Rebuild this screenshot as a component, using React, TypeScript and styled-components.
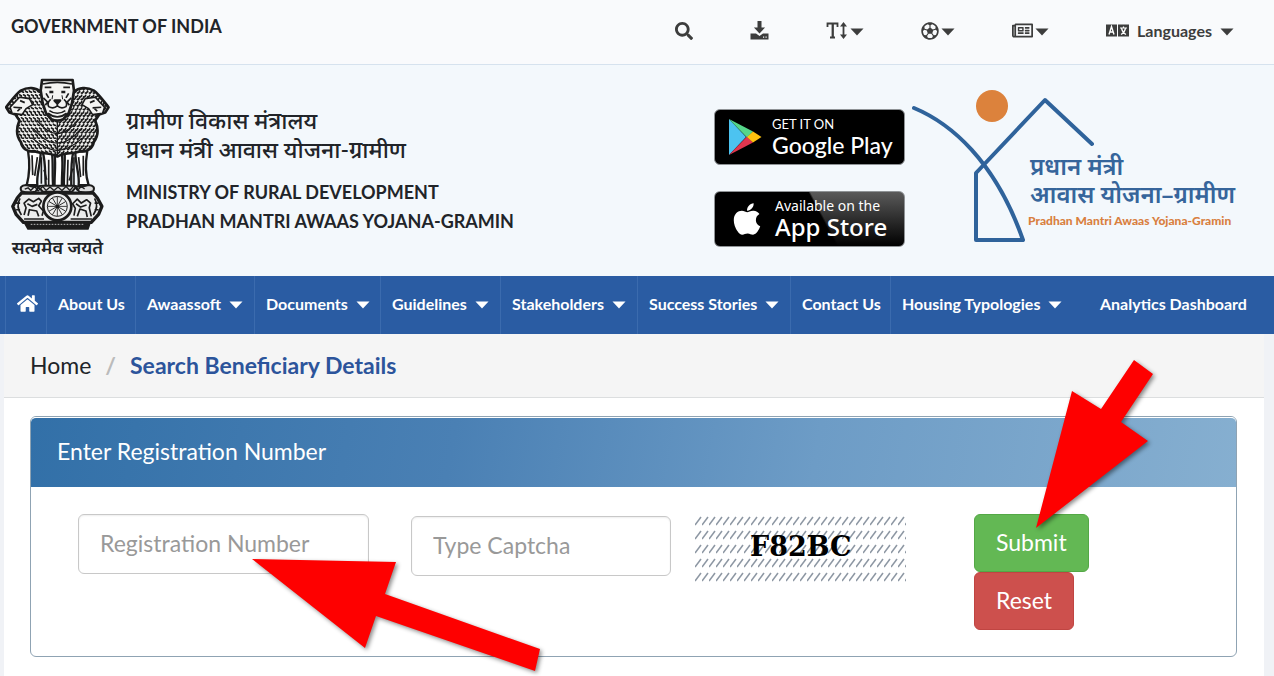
import React from "react";
import styled, { createGlobalStyle } from "styled-components";
import {
  FaSearch,
  FaRegFutbol,
  FaRegNewspaper,
  FaHome,
  FaApple,
} from "react-icons/fa";

const GlobalStyle = createGlobalStyle`
  *, *::before, *::after { box-sizing: border-box; }
  body {
    margin: 0;
    background: #f0f2f6;
    color: #212429;
    font-family: Lato, "Noto Sans", sans-serif;
    overflow-x: hidden;
  }
  a { color: inherit; text-decoration: none; }
  button { font-family: inherit; cursor: pointer; }
`;

const Page = styled.div`
  display: flex;
  flex-direction: column;
  min-height: 100vh;
`;

/* ---------- top bar ---------- */

const TopBar = styled.div`
  display: flex;
  justify-content: space-between;
  height: 65px;
  padding: 0 40px 0 11px;
  background: #f9fafc;
  border-bottom: 1px solid #d6e2ee;
`;

const GovLink = styled.a`
  padding-top: 14px;
  font-size: 18px;
  line-height: 24px;
  font-weight: 700;
`;

const Tools = styled.div`
  display: flex;
  align-items: center;
  gap: 57px;
  height: 61px;
  color: #3d3d3d;
`;

const Tool = styled.button`
  display: flex;
  align-items: center;
  gap: 2px;
  padding: 0;
  border: 0;
  background: none;
  color: inherit;
  font-size: 18px;
`;

const LanguageTool = styled(Tool)`
  gap: 8px;
  font-size: 16px;
  font-weight: 700;
`;

const CaretIcon = styled.svg`
  flex: none;
  margin-top: 3px;
`;

/* ---------- masthead ---------- */

const Masthead = styled.header`
  display: flex;
  justify-content: space-between;
  height: 211px;
  padding: 0 38px 0 5px;
  background: #f3f8fc;
`;

const Brand = styled.a`
  display: flex;
  gap: 16px;
`;

const EmblemBox = styled.div`
  display: flex;
  flex-direction: column;
  align-items: center;
  width: 105px;
  padding-top: 13px;
`;

const Motto = styled.span`
  font-size: 18px;
  line-height: 32px;
  font-weight: 600;
  white-space: nowrap;
`;

const BrandText = styled.div`
  display: flex;
  flex-direction: column;
  padding-top: 41px;
  font-weight: 700;
  white-space: nowrap;
`;

const HindiLine = styled.span`
  font-size: 23px;
  line-height: 29px;
  font-weight: 500;
`;

const EnglishName = styled.div`
  padding-top: 14px;
  font-size: 18px;
  line-height: 29px;
`;

const Partners = styled.div`
  display: flex;
  gap: 6px;
`;

const Stores = styled.div`
  display: flex;
  flex-direction: column;
  gap: 26px;
  padding-top: 44px;
`;

const StoreBadge = styled.a<{ $shine?: boolean }>`
  display: flex;
  align-items: center;
  gap: 10px;
  width: 191px;
  height: 56px;
  padding-left: ${(p) => (p.$shine ? 14 : 13)}px;
  border: 1px solid #8f9396;
  border-radius: 6px;
  color: #fff;
  background: ${(p) =>
    p.$shine
      ? "linear-gradient(62deg, #000 56%, transparent 57%), linear-gradient(#5a5a5a, #000)"
      : "#000"};
`;

const StoreText = styled.span`
  display: flex;
  flex-direction: column;
  white-space: nowrap;
`;

const StoreSmall = styled.span<{ $wide?: boolean }>`
  font-family: ${(p) => (p.$wide ? '"Noto Sans"' : "Lato")}, sans-serif;
  font-size: ${(p) => (p.$wide ? 14 : 13)}px;
  line-height: 16px;
`;

const StoreName = styled.span<{ $wide?: boolean }>`
  font-family: ${(p) => (p.$wide ? '"Noto Sans"' : "Lato")}, sans-serif;
  font-size: ${(p) => (p.$wide ? 24 : 23)}px;
  line-height: 26px;
  font-weight: 500;
`;

/* ---------- navigation ---------- */

const Nav = styled.nav`
  background: #2a5ca3;
`;

const NavList = styled.ul`
  display: grid;
  grid-template-columns: 41fr 89fr 119fr 126fr 120fr 137fr 153fr 100fr 198fr 186fr;
  margin: 0;
  padding: 0 0 0 5px;
  list-style: none;
`;

const NavItem = styled.li<{ $plain?: boolean }>`
  height: 58px;
  border-left: 1px solid ${(p) => (p.$plain ? "transparent" : "#3b6bae")};
`;

const NavLink = styled.a`
  display: flex;
  align-items: center;
  gap: 8px;
  height: 55px;
  padding-left: 11px;
  color: #fff;
  font-size: 16px;
  font-weight: 700;
  white-space: nowrap;
`;

/* ---------- content ---------- */

const Content = styled.main`
  flex: 1;
  margin: 0 10px 0 4px;
  padding-bottom: 19px;
  background: #fff;
`;

const Crumbs = styled.ol`
  display: flex;
  align-items: center;
  gap: 14px;
  height: 64px;
  margin: 0;
  padding: 0 26px 2px;
  list-style: none;
  background: #f5f5f5;
  border-bottom: 1px solid #dcdedf;
  font-size: 23px;
  line-height: 28px;
  white-space: nowrap;
`;

const CrumbSlash = styled.li`
  color: #bbb;
  font-weight: 700;
`;

const CrumbCurrent = styled.li`
  color: #2c549b;
  font-weight: 700;
`;

const Panel = styled.section`
  margin: 18px 27px 0 26px;
  border: 1px solid #8fa3b3;
  border-radius: 6px;
`;

const PanelTitle = styled.h2`
  margin: 0;
  padding: 18px 26px 21px;
  border-top: 1px solid #fff;
  border-radius: 5px 5px 0 0;
  background: linear-gradient(100deg, #3270a8, #4a80b4 35%, #6d9cc6 65%, #86afd0);
  color: #fff;
  font-size: 23px;
  line-height: 30px;
  font-weight: 400;
`;

const Form = styled.form`
  display: grid;
  grid-template-columns:
    minmax(0, 333fr) minmax(0, 284fr) minmax(0, 279fr) minmax(0, 262fr);
  align-items: start;
  padding: 27px 0 26px 47px;
`;

const Field = styled.label<{ $gap: number; $drop?: boolean }>`
  position: relative;
  display: block;
  padding-top: ${(p) => (p.$drop ? 2 : 0)}px;
  padding-right: ${(p) => p.$gap}px;
`;

const TextBox = styled.input`
  display: block;
  width: 100%;
  height: 60px;
  padding: 0 21px 2px;
  border: 1px solid #c8c8c8;
  border-radius: 6px;
  background: #fff;
  box-shadow: inset 0 1px 2px #eee;
  font-family: inherit;
  font-size: 23px;
  &::placeholder {
    color: #999;
    opacity: 1;
  }
`;

const Actions = styled.div`
  position: relative;
  display: flex;
  flex-direction: column;
  align-items: flex-start;
`;

const ActionButton = styled.button<{ $tone: string; $edge: string }>`
  height: 58px;
  padding: 0 21px 3px;
  border: 1px solid ${(p) => p.$edge};
  border-radius: 6px;
  background: ${(p) => p.$tone};
  color: #fff;
  font-size: 23px;
  line-height: 28px;
`;

const Pointer = styled.svg<{ $left: number; $top: number }>`
  position: absolute;
  left: ${(p) => p.$left}px;
  top: ${(p) => p.$top}px;
  z-index: 2;
  pointer-events: none;
  overflow: visible;
  filter: drop-shadow(2px 2px 2px rgba(0, 0, 0, 0.45));
`;

/* ---------- drawings ---------- */

const Caret = () => (
  <CaretIcon width="14" height="8" viewBox="0 0 14 8" aria-hidden="true">
    <path d="M0.5 0.5h13L7 7.500z" fill="currentColor" />
  </CaretIcon>
);

const DownloadIcon = () => (
  <svg width="19" height="19" viewBox="0 0 19 19" aria-hidden="true" fill="currentColor">
    <path d="M7.500 0h4v6.500h3.600L9.500 12.500 3.900 6.500h3.600z" />
    <path d="M0.500 12.500h5.500l3.500 2.500 3.500-2.500h5.500v6h-18zM13 15.500v1.200h1.200v-1.200zM15.500 15.500v1.200h1.200v-1.200z" fillRule="evenodd" />
  </svg>
);

const TextHeightIcon = () => (
  <svg width="22" height="17" viewBox="0 0 22 17" aria-hidden="true" fill="none" stroke="currentColor">
    <path d="M1.500 5V1.500h10V5M6.500 1.500v14M4 15.500h5" strokeWidth="1.800" />
    <path d="M7 2v13" strokeWidth="1.600" />
    <path d="M17.500 3v11" strokeWidth="1.800" />
    <path d="M17.500 0L21 4.500h-7zM17.500 17L21 12.500h-7z" fill="currentColor" stroke="none" />
  </svg>
);

const LanguageIcon = () => (
  <svg width="23" height="13" viewBox="0 0 23 13" aria-hidden="true">
    <path d="M0 0.500h11v12H0zM12 0.500h11v12H12z" fill="#3d3d3d" />
    <path d="M3 10.500L5.500 2.500 8 10.500M4 8h3" fill="none" stroke="#fff" strokeWidth="1.400" />
    <path d="M14 4h7M17.500 2.500V4M19.500 4.500c-.8 3-2.500 5-4.500 6M15.500 4.500c.8 3 2.500 5 4.500 6" fill="none" stroke="#fff" strokeWidth="1.200" />
  </svg>
);

const manePath =
  "M122 66C108 52 84 50 62 62C50 70 40 84 18 112L28 128L46 134L58 152C48 176 50 200 62 216C66 236 82 248 104 244C120 254 140 244 172 260C204 244 224 254 240 244C262 248 278 236 282 216C294 200 296 176 286 152L298 134L316 128L326 112C304 84 294 70 282 62C260 50 236 52 222 66Z";

const curls: string[] = [];
for (let row = 0; row < 21; row++) {
  for (let col = 0; col < 27; col++) {
    const x = 14 + col * 12 + (row % 2) * 6;
    const y = 54 + row * 10;
    const side = x < 172 ? 1 : -1;
    const bend = ((row * 7 + col * 5) % 5) - 2;
    curls.push(`M${x - 5} ${y - side * 3 + bend}q${4 + bend} ${7 - bend} ${9} ${side * 5}`);
  }
}

const legs = [
  "M84 244C90 280 88 316 80 346H112C108 316 122 284 122 246Z",
  "M128 246C138 280 134 316 138 358H160C156 316 160 280 156 250Z",
  "M164 256C168 290 162 320 164 362H186C184 320 190 290 186 254Z",
  "M194 250C196 280 190 320 192 358H214C214 316 212 280 220 246Z",
  "M226 246C226 284 240 316 236 346H266C256 316 256 280 262 244Z",
];

const Emblem = () => (
  <svg width="105" height="153" viewBox="15 24 315 460" role="img" aria-label="State Emblem of India" fill="none" stroke="#1c1c1c" strokeLinejoin="round">
    <defs>
      <clipPath id="mane">
        <path d={manePath} />
      </clipPath>
    </defs>
    {legs.map((d) => (
      <path key={d} d={d} fill="#fff" strokeWidth="7" />
    ))}
    <path d="M96 256l2 60M112 262l-8 56M146 270v80M204 270l-2 80M236 262l6 60M250 258v60M124 262v80M222 262v84M132 300l8 30M218 296l-10 36" strokeWidth="5" />
    <path d={manePath} fill="#f4f4f2" strokeWidth="8" />
    <g clipPath="url(#mane)">
      <path d={curls.join("")} strokeWidth="5" />
      <path d="M110 150q30 40 62 42q32-2 62-42M100 176q36 44 72 44q36 0 72-44M96 204q40 36 76 38q36-2 76-38M172 150v110" strokeWidth="4" />
      <path d="M30 112l28-30 30 4 10 18-20 12-12 18-30-4zM314 112l-28-30-30 4-10 18 20 12 12 18 30-4z" fill="#f4f4f2" strokeWidth="5" />
      <path d="M40 112l26 2M304 112l-26 2M60 92l14 6M284 92l-14 6M52 124l8-8M292 124l-8-8" strokeWidth="5" />
    </g>
    <path d="M126 30H218L222 62L216 100L206 130L190 148Q172 156 154 148L138 130L128 100L122 62Z" fill="#f4f4f2" strokeWidth="8" />
    <path d="M128 42q44-10 88 0M134 52h20M190 52h20M130 84l12 12-6 10M214 84l-12 12 6 10M152 88q-12 10-6 22 14 8 26-2 12 10 26 2 6-12-6-22M172 98v12M148 122q24 16 48 0M144 130q28 22 56 0M138 70l8 14M206 70l-8 14" strokeWidth="5" />
    <path d="M148 66h12M184 66h12M164 92h16l-8 8z" fill="#1c1c1c" strokeWidth="8" />
    <path d="M158 76l-2 12M186 76l2 12" strokeWidth="3" />
    <path d="M78 346q-22 2-14 18 20 8 42 2l10-14 12 14h88l12-14 10 14q22 6 42-2 8-16-14-18l-24 6-20-4H124l-22 4Z" fill="#ddd" strokeWidth="6" />
    <path d="M74 358l10-4 8 8 12-12 10 14 14-14 10 12 12-10 12 10 12-10 12 10 12-12 12 12 12-14 10 14 12-12 10 8" strokeWidth="4" />
    <path d="M64 370H280L292 384L306 410L296 434L274 458H70L48 434L38 410L52 384Z" fill="#eceded" strokeWidth="10" />
    <path d="M60 386q-14 24 4 50M284 386q14 24-4 50M48 400h12M48 420h12M296 400h-12M296 420h-12" strokeWidth="5" />
    <path d="M72 436l6-22-6-14 14-12 14 8 16-10 8 8-8 14 14 16-4 14M84 438l4-18 22 4 6 16M82 402l14 8 16-6M72 448h60M212 448h64M222 438l4-22-8-14 14-14 12 12 16-10 12 10-4 14 6 26M232 440l8-22 18 6 4 18M228 402l14 10 18-6" strokeWidth="5" />
    <circle cx="172" cy="410" r="42" fill="#eceded" strokeWidth="8" />
    <circle cx="172" cy="410" r="30" strokeWidth="3" />
    {Array.from({ length: 12 }, (_, i) => (
      <path key={i} d="M172 404V381" strokeWidth="2.500" transform={`rotate(${i * 30} 172 410)`} />
    ))}
    <circle cx="172" cy="410" r="6" fill="#1c1c1c" />
    <path d="M74 460H270L264 478H84Z" fill="#1c1c1c" strokeWidth="5" />
    <path d="M92 464h160" stroke="#bbb" strokeWidth="3" strokeDasharray="5 4" />
  </svg>
);

const PlayLogo = () => (
  <svg width="34" height="38" viewBox="0 0 34 38" aria-hidden="true">
    <path d="M1 1v36l17-18z" fill="#4cc3f0" />
    <path d="M1 1l24 12.500-6 6z" fill="#55d68a" />
    <path d="M1 37l24-12.500-6-6z" fill="#e0364f" />
    <path d="M25 13.500L33.500 19 25 24.500 19 19z" fill="#fdc30f" />
  </svg>
);

const SchemeLogo = styled.svg`
  display: block;
  margin-top: 21px;
  overflow: visible;
`;

const LogoHindi = styled.text`
  fill: #36659b;
  font-family: "Noto Sans", sans-serif;
  font-size: 24px;
  font-weight: 600;
`;

const LogoEnglish = styled.text`
  fill: #d9803f;
  font-family: Lato, sans-serif;
  font-size: 12px;
  font-weight: 900;
`;

const AwaasLogo = () => (
  <SchemeLogo width="325" height="160" viewBox="911 86 325 160" role="img" aria-label="Pradhan Mantri Awaas Yojana-Gramin">
    <circle cx="992" cy="106" r="16" fill="#dc823c" />
    <g fill="none" stroke="#2f639b" strokeWidth="4" strokeLinejoin="round" strokeLinecap="round">
      <path d="M914 108C950 123 995 160 1023 240H976V173L1045 100L1092 144" />
    </g>
    <LogoHindi x="1030" y="175">प्रधान मंत्री</LogoHindi>
    <LogoHindi x="1030" y="203">आवास योजना–ग्रामीण</LogoHindi>
    <LogoEnglish x="1028" y="225">Pradhan Mantri Awaas Yojana-Gramin</LogoEnglish>
  </SchemeLogo>
);

const CaptchaText = styled.text`
  font-family: "DejaVu Serif", serif;
  font-size: 27px;
  font-weight: 700;
`;

const Captcha = () => (
  <svg width="211" height="68" viewBox="0 0 211 68" role="img" aria-label="Captcha F82BC">
    <defs>
      <pattern id="hatch" width="7" height="14" patternUnits="userSpaceOnUse">
        <path d="M0 11L6 3" stroke="#8d97a3" strokeWidth="1.500" />
      </pattern>
    </defs>
    <rect width="211" height="68" fill="url(#hatch)" />
    <CaptchaText x="55" y="42">F82BC</CaptchaText>
  </svg>
);

/* ---------- page ---------- */

const menu = [
  { label: "About Us" },
  { label: "Awaassoft", more: true },
  { label: "Documents", more: true },
  { label: "Guidelines", more: true },
  { label: "Stakeholders", more: true },
  { label: "Success Stories", more: true },
  { label: "Contact Us" },
  { label: "Housing Typologies", more: true },
  { label: "Analytics Dashboard", plain: true },
];

export default function App() {
  return (
    <Page>
      <GlobalStyle />
      <TopBar>
        <GovLink href="#">GOVERNMENT OF INDIA</GovLink>
        <Tools>
          <Tool aria-label="Search"><FaSearch /></Tool>
          <Tool aria-label="Download"><DownloadIcon /></Tool>
          <Tool aria-label="Text size"><TextHeightIcon /><Caret /></Tool>
          <Tool aria-label="Sports"><FaRegFutbol /><Caret /></Tool>
          <Tool aria-label="News"><FaRegNewspaper size={21} /><Caret /></Tool>
          <LanguageTool><LanguageIcon />Languages <Caret /></LanguageTool>
        </Tools>
      </TopBar>

      <Masthead>
        <Brand href="#">
          <EmblemBox>
            <Emblem />
            <Motto>सत्यमेव जयते</Motto>
          </EmblemBox>
          <BrandText>
            <HindiLine>ग्रामीण विकास मंत्रालय</HindiLine>
            <HindiLine>प्रधान मंत्री आवास योजना-ग्रामीण</HindiLine>
            <EnglishName>
              MINISTRY OF RURAL DEVELOPMENT
              <br />
              PRADHAN MANTRI AWAAS YOJANA-GRAMIN
            </EnglishName>
          </BrandText>
        </Brand>
        <Partners>
          <Stores>
            <StoreBadge href="#">
              <PlayLogo />
              <StoreText>
                <StoreSmall>GET IT ON</StoreSmall>
                <StoreName>Google Play</StoreName>
              </StoreText>
            </StoreBadge>
            <StoreBadge href="#" $shine>
              <FaApple size={36} />
              <StoreText>
                <StoreSmall $wide>Available on the</StoreSmall>
                <StoreName $wide>App Store</StoreName>
              </StoreText>
            </StoreBadge>
          </Stores>
          <AwaasLogo />
        </Partners>
      </Masthead>

      <Nav>
        <NavList>
          <NavItem>
            <NavLink href="#" aria-label="Home"><FaHome size={21} /></NavLink>
          </NavItem>
          {menu.map((m) => (
            <NavItem key={m.label} $plain={m.plain}>
              <NavLink href="#">
                {m.label}
                {m.more && <Caret />}
              </NavLink>
            </NavItem>
          ))}
        </NavList>
      </Nav>

      <Content>
        <Crumbs>
          <li><a href="#">Home</a></li>
          <CrumbSlash>/</CrumbSlash>
          <CrumbCurrent>Search Beneficiary Details</CrumbCurrent>
        </Crumbs>

        <Panel>
          <PanelTitle>Enter Registration Number</PanelTitle>
          <Form onSubmit={(e) => e.preventDefault()}>
            <Field $gap={42}>
              <TextBox aria-label="Registration Number" placeholder="Registration Number" />
              <Pointer $left={174} $top={45} width="288" height="112" viewBox="0 0 288 112" aria-hidden="true">
                <path d="M0 0L144 3 133 35 288 90 283 112 124 57 113 89z" fill="#fe0000" />
              </Pointer>
            </Field>
            <Field $gap={24} $drop>
              <TextBox aria-label="Type Captcha" placeholder="Type Captcha" />
            </Field>
            <Captcha />
            <Actions>
              <ActionButton type="submit" $tone="#63b854" $edge="#54a846">Submit</ActionButton>
              <ActionButton type="reset" $tone="#cd504d" $edge="#c04542">Reset</ActionButton>
              <Pointer $left={62} $top={-154} width="117" height="168" viewBox="0 0 117 168" aria-hidden="true">
                <path d="M0 168L36 31 65 49 98 0 117 14 85 62 112 81z" fill="#fe0000" />
              </Pointer>
            </Actions>
          </Form>
        </Panel>
      </Content>
    </Page>
  );
}
